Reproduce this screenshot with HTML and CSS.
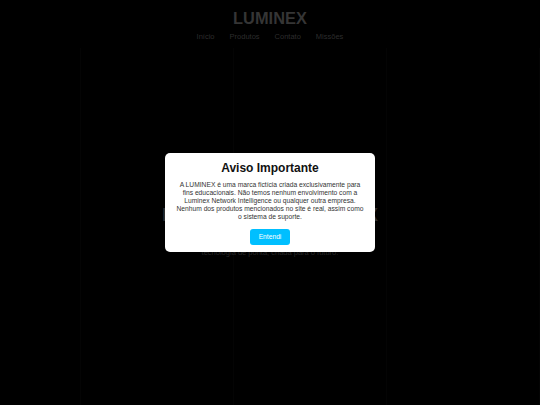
FILE: index.html
```html
<!DOCTYPE html>
<html lang="pt-BR">
<head>
<meta charset="utf-8">
<title>LUMINEX</title>
<link rel="stylesheet" href="styles.css">
</head>
<body>
<header class="site-header">
  <div class="logo">LUMINEX</div>
  <nav class="nav">
    <a href="#">Início</a>
    <a href="#">Produtos</a>
    <a href="#">Contato</a>
    <a href="#">Missões</a>
  </nav>
</header>
<main class="main">
  <section class="hero">
    <h1 class="hero-title">BEM-VINDO À LUMINEX</h1>
    <p class="hero-sub">tecnologia de ponta, criada para o futuro.</p>
  </section>
</main>
<div class="overlay">
  <div class="modal">
    <h2 class="modal-title">Aviso Importante</h2>
    <p class="modal-text">A LUMINEX é uma marca fictícia criada exclusivamente para<br>fins educacionais. Não temos nenhum envolvimento com a<br>Luminex Network Intelligence ou qualquer outra empresa.<br>Nenhum dos produtos mencionados no site é real, assim como<br>o sistema de suporte.</p>
    <button class="modal-btn" type="button">Entendi</button>
  </div>
</div>
</body>
</html>
```
FILE: styles.css
```css
* { box-sizing: border-box; }
html, body { margin: 0; padding: 0; }
body {
  background: #000;
  font-family: "Liberation Sans", Arial, sans-serif;
  min-height: 405px;
  overflow: hidden;
}
.site-header {
  display: flex;
  flex-direction: column;
  align-items: center;
  padding-top: 8px;
  height: 48px;
}
.logo {
  font-size: 16.4px;
  font-weight: bold;
  line-height: 20px;
  color: #3b3b3b;
}
.nav {
  display: flex;
  gap: 15px;
  margin-top: 4px;
}
.nav a {
  font-size: 7.5px;
  line-height: 10px;
  color: #333;
  text-decoration: none;
}
.main {
  height: 357px;
  background-color: #000;
  background-image: repeating-linear-gradient(to right, #050505 0, #050505 1px, transparent 1px, transparent 153px);
  background-position: 80px 0;
}
.hero {
  display: flex;
  flex-direction: column;
  align-items: center;
  padding-top: 155px;
}
.hero-title {
  margin: 0;
  font-size: 18.8px;
  line-height: 24px;
  font-weight: bold;
  color: #333;
}
.hero-sub {
  margin: 21px 0 0;
  font-size: 7.5px;
  line-height: 10px;
  color: #2c2c2c;
}
.overlay {
  position: fixed;
  inset: 0;
  background: rgba(0, 0, 0, 0.1);
  display: flex;
  align-items: center;
  justify-content: center;
}
.modal {
  width: 210px;
  background: #fff;
  border-radius: 5px;
  padding: 8px 6px 7px;
  display: flex;
  flex-direction: column;
  align-items: center;
  text-align: center;
}
.modal-title {
  margin: 0;
  font-size: 12px;
  line-height: 15px;
  font-weight: bold;
  color: #111;
}
.modal-text {
  margin: 5px 0 0;
  font-size: 6.7px;
  line-height: 7.9px;
  color: #333;
  white-space: nowrap;
}
.modal-btn {
  margin-top: 8px;
  width: 40px;
  height: 16px;
  padding: 0;
  border: none;
  border-radius: 3px;
  background: #00bfff;
  color: #fff;
  font-family: "Liberation Sans", Arial, sans-serif;
  font-size: 6.7px;
}
```
